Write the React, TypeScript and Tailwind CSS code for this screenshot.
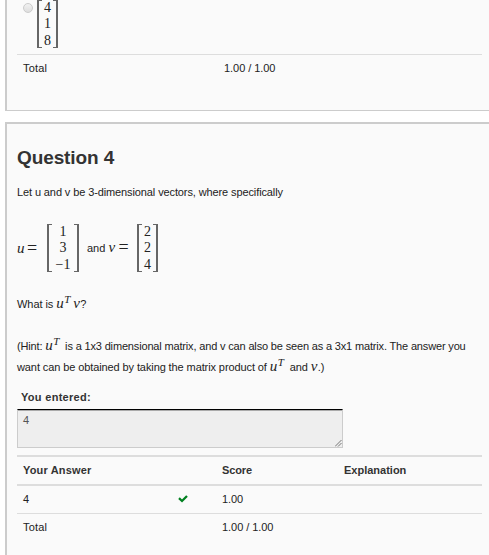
import React from "react";

const math = "font-['Liberation_Serif'] text-[#222]";

function Matrix({ rows, width }: { rows: string[]; width: string }) {
  return (
    <span className={`flex h-12 shrink-0 ${width}`}>
      <span className="w-[5px] border-y border-l-2 border-[#666]" />
      <span className={`-mx-1 flex flex-1 flex-col items-center text-[14px] leading-[16.4px] ${math}`}>
        {rows.map((row, i) => (
          <span key={i} className="whitespace-nowrap">{row}</span>
        ))}
      </span>
      <span className="w-[5px] border-y border-r-2 border-[#666]" />
    </span>
  );
}

function V({ children }: { children: React.ReactNode }) {
  return <i className={`inline-block w-[7px] text-[15px] leading-none tracking-normal ${math}`}>{children}</i>;
}

function Equals() {
  return <span className={`relative top-px ml-[3px] text-[18px] leading-none ${math}`}>=</span>;
}

function UT() {
  return (
    <span className={`inline-block w-[17px] whitespace-nowrap leading-none tracking-normal ${math}`}>
      <i className="inline-block w-[8px] text-[15px]">u</i>
      <i className="relative -top-[5px] text-[11px]">T</i>
    </span>
  );
}

export default function App() {
  return (
    <main className="h-[555px] w-[489px] overflow-hidden bg-white font-['Liberation_Sans',Arial,sans-serif] text-[11px] text-[#222]">
      <section className="ml-[5px] h-[111px] border-b border-l-2 border-[#ccc] bg-[#fafafa] pl-[10px]">
        <div className="flex h-[54px] items-start pl-[6px]">
          <span className="mt-[3px] h-[10px] w-[10px] rounded-full border border-[#ccc] bg-linear-to-b from-[#f2f2f2] to-[#dedede]" />
          <span className="ml-[4px]"><Matrix rows={["4", "1", "8"]} width="w-[21px]" /></span>
        </div>
        <div className="flex w-[465px] border-t border-[#ddd] pl-[6px] pt-[5px] leading-4">
          <span className="w-[201px] tracking-[0.2px]">Total</span>
          <span className="tracking-[-0.05px]">1.00 / 1.00</span>
        </div>
      </section>

      <section className="ml-[5px] mt-[11px] h-[433px] border-l-2 border-t-2 border-[#ccc] bg-[#fafafa] pl-[10px]">
        <h2 className="pt-[22px] text-[19px] font-bold leading-6 tracking-[-0.1px] text-[#333]">Question 4</h2>
        <p className="mt-[14px] h-4 whitespace-nowrap leading-4 tracking-[-0.11px]">Let u and v be 3-dimensional vectors, where specifically</p>

        <div className="mt-6 flex h-12 items-center">
          <span className="mb-px w-[30px] whitespace-nowrap"><V>u</V><Equals /></span>
          <Matrix rows={["1", "3", "−1"]} width="w-[32px]" />
          <span className="mb-[2px] ml-[8px] w-[50px] whitespace-nowrap">and <V>v</V><Equals /></span>
          <Matrix rows={["2", "2", "4"]} width="w-[21px]" />
        </div>

        <p className="mt-[24px] h-4 whitespace-nowrap leading-4 tracking-[-0.05px]">What is <UT /><V>v</V>?</p>
        <div className="mt-[24px] whitespace-nowrap leading-[21px]">
          <p className="h-[21px] tracking-[-0.16px]">(Hint: <UT /> is a 1x3 dimensional matrix, and v can also be seen as a 3x1 matrix. The answer you</p>
          <p className="h-[21px] tracking-[-0.1px]">want can be obtained by taking the matrix product of <UT /> and <V>v</V>.)</p>
        </div>

        <p className="mt-[11px] h-4 pl-[4px] font-bold leading-4 tracking-[0.3px] text-[#333]">You entered:</p>
        <div className="mt-[4px] flex h-[39px] w-[326px] justify-between border border-[#ccc] border-t-black bg-[#eee] pl-[5px] pt-[2px] text-[#555] shadow-[inset_0_1px_0_#aaa]">
          <span className="leading-4">4</span>
          <svg className="self-end" width="7" height="7" viewBox="0 0 7 7" stroke="#555" strokeWidth="0.8">
            <path d="M0 6.5L6.5 0M3 6.5L6.5 3" />
          </svg>
        </div>

        <div className="mt-[7px] w-[465px] leading-4">
          <div className="flex h-[29px] border-t-2 border-[#ddd] pl-[6px] pt-[5px] font-bold text-[#333]">
            <span className="w-[199px] tracking-[0.17px]">Your Answer</span>
            <span className="w-[122px] tracking-[-0.1px]">Score</span>
            <span>Explanation</span>
          </div>
          <div className="flex h-[29px] border-t-2 border-[#ddd] pl-[6px] pt-[5px]">
            <span className="w-[155px]">4</span>
            <span className="w-[44px] pt-[4px]">
              <svg width="10" height="8" viewBox="0 0 10 8" fill="none" stroke="#008020" strokeWidth="2.3">
                <path d="M1 3.2L4 6L9 1" />
              </svg>
            </span>
            <span className="tracking-[-0.1px]">1.00</span>
          </div>
          <div className="flex border-t border-[#ddd] pl-[6px] pt-[5px]">
            <span className="w-[199px] tracking-[0.2px]">Total</span>
            <span className="tracking-[-0.05px]">1.00 / 1.00</span>
          </div>
        </div>
      </section>
    </main>
  );
}
